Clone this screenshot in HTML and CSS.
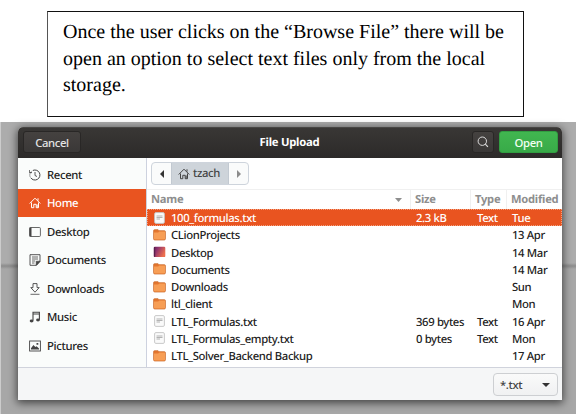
FILE: index.html
```html
<!DOCTYPE html>
<html lang="en">
<head>
<meta charset="utf-8">
<title>File Upload</title>
<link rel="stylesheet" href="styles.css">
</head>
<body>
<svg class="defs" width="0" height="0">
  <defs>
    <linearGradient id="desk" x1="0" y1="0" x2="1" y2="0.5"><stop offset="0" stop-color="#6f2457"/><stop offset=".3" stop-color="#8b3070"/><stop offset="1" stop-color="#ee6f4e"/></linearGradient>
    <symbol id="home" viewBox="0 0 12 12"><path d="M.7 6.5 6 1.2l5.3 5.3M2.5 5.5v5.2h2.3V7.3h2.4v3.4h2.3V5.5M9 1.3v2.4M8.2 7.5v3" fill="none" stroke="currentColor"/></symbol>
    <symbol id="folder" viewBox="0 0 13 12"><path d="M1.5.7h3.6l1 1h5.3q1 0 1 1v7.1q0 1.2-1.2 1.2H1.8Q.6 11 .6 9.800V1.700q0-1 .9-1z" fill="#e4762f" stroke="#c96829" stroke-width=".7"/><path d="M1 3.400h4.200l1-.9H12v7.200q0 .8-.8.8H1.800Q1 10.500 1 9.700z" fill="#f79e55"/></symbol>
    <symbol id="file" viewBox="0 0 12 12"><rect x="1.100" y=".6" width="9.800" height="10.800" rx="1.300" fill="#fafafa" stroke="#c3c3c3" stroke-width=".9"/><path d="M3 4h6M3 5.500h6M3 7h3.500" stroke="#aaa" stroke-width=".9"/></symbol>
    <symbol id="desktopfolder" viewBox="0 0 13 12"><rect x=".7" y=".7" width="11.600" height="10.400" rx="1.200" fill="url(#desk)"/><path d="M1.600 1v9.800" stroke="#57204b" stroke-width="1.200"/></symbol>
  </defs>
</svg>
<div class="note"><p>Once the user clicks on the “Browse File” there will be</p><p>open an option to select text files only from the local</p><p>storage.</p></div>
<main class="backdrop">
  <section class="dialog">
    <header class="titlebar">
      <button class="btn cancel">Cancel</button>
      <h1>File Upload</h1>
      <button class="btn search"><svg width="12" height="12" viewBox="0 0 12 12"><circle cx="5.300" cy="5.200" r="4.200" fill="none" stroke="#ddd"/><path d="m8.300 8.200 2.600 2.600" stroke="#ddd" stroke-width="1.200"/></svg></button>
      <button class="btn open">Open</button>
    </header>
    <div class="content">
      <nav class="places">
        <div class="place"><svg viewBox="0 0 12 12"><path d="M4 1.400A5 5 0 1 1 1.700 8.700" fill="none" stroke="currentColor"/><path d="M1 7.500A5 5 0 0 1 3.200 1.800" fill="none" stroke="currentColor" stroke-dasharray="1 1"/><path d="M6 3v3.500l2 1M.3 1v2.600H3" fill="none" stroke="currentColor" stroke-width=".9"/></svg><span>Recent</span></div>
        <div class="place active"><svg><use href="#home"/></svg><span>Home</span></div>
        <div class="place"><svg viewBox="0 0 12 12"><rect x=".6" y="1.500" width="10.800" height="9" rx="1" fill="none" stroke="currentColor" stroke-width=".8"/><path d="M1.500 1.500v9" stroke="currentColor" stroke-width="2"/></svg><span>Desktop</span></div>
        <div class="place"><svg viewBox="0 0 12 12"><path d="M1 .7h10v6.600L7.300 11.300H1zM11 7.300H7.300v4z" fill="none" stroke="currentColor" stroke-width=".9"/><path d="M7.400 7.400H11l-3.600 3.900z" fill="currentColor"/><path d="M3 3h6M3 5h6M3 7h3.200M3 9h2.500" stroke="currentColor" stroke-width=".8"/></svg><span>Documents</span></div>
        <div class="place"><svg viewBox="0 0 12 12"><path d="M4 .6h4v4h2.200L6 9.200 1.800 4.600H4z" fill="none" stroke="currentColor" stroke-width=".9"/><path d="M1.500 11.300h9" stroke="currentColor" stroke-width=".8"/></svg><span>Downloads</span></div>
        <div class="place"><svg viewBox="0 0 12 12"><path d="M4 9.600V1.200h6.400v7.600M4 3h6.400" fill="none" stroke="currentColor" stroke-width="1.100"/><ellipse cx="2.600" cy="10" rx="1.900" ry="1.400" fill="currentColor"/><ellipse cx="9" cy="9" rx="1.900" ry="1.400" fill="currentColor"/></svg><span>Music</span></div>
        <div class="place"><svg viewBox="0 0 12 12"><rect x=".6" y="1" width="10.800" height="10" fill="none" stroke="currentColor" stroke-width=".9"/><path d="M2 9.500V8.200L4.400 5l2 2 1.200-.8L10 8.400v1.100zM7.500 3h1.800v1.800H7.500z" fill="currentColor"/></svg><span>Pictures</span></div>
      </nav>
      <div class="browser">
        <div class="pathbar"><span class="step"><svg width="4" height="8"><path d="M4 0v8L0 4z" fill="#333"/></svg></span><span class="here"><svg width="12" height="12"><use href="#home"/></svg><span>tzach</span></span><span class="step"><svg width="4" height="8"><path d="M0 0v8l4-4z" fill="#8c8c8c"/></svg></span></div>
        <div class="row head"><span class="name">Name<svg width="7" height="4"><path d="M0 0h7L3.500 4z" fill="#8e8e8e"/></svg></span><span>Size</span><span>Type</span><span>Modified</span></div>
        <div class="files">
          <div class="row selected"><svg><use href="#file"/></svg><span>100_formulas.txt</span><span>2.3 kB</span><span>Text</span><span>Tue</span></div>
          <div class="row"><svg><use href="#folder"/></svg><span>CLionProjects</span><span></span><span></span><span>13 Apr</span></div>
          <div class="row"><svg><use href="#desktopfolder"/></svg><span>Desktop</span><span></span><span></span><span>14 Mar</span></div>
          <div class="row"><svg><use href="#folder"/></svg><span>Documents</span><span></span><span></span><span>14 Mar</span></div>
          <div class="row"><svg><use href="#folder"/></svg><span>Downloads</span><span></span><span></span><span>Sun</span></div>
          <div class="row"><svg><use href="#folder"/></svg><span>ltl_client</span><span></span><span></span><span>Mon</span></div>
          <div class="row"><svg><use href="#file"/></svg><span>LTL_Formulas.txt</span><span>369 bytes</span><span>Text</span><span>16 Apr</span></div>
          <div class="row"><svg><use href="#file"/></svg><span>LTL_Formulas_empty.txt</span><span>0 bytes</span><span>Text</span><span>Mon</span></div>
          <div class="row"><svg><use href="#folder"/></svg><span>LTL_Solver_Backend Backup</span><span></span><span></span><span>17 Apr</span></div>
          <div class="row"><svg><use href="#folder"/></svg></div>
        </div>
      </div>
    </div>
    <footer class="actions"><button class="filter"><span>*.txt</span><svg width="8" height="4"><path d="M0 0h8L4 4z" fill="#333"/></svg></button></footer>
  </section>
</main>
</body>
</html>
```

FILE: styles.css
```css
* { box-sizing: border-box; }
body { margin: 0; width: 576px; height: 414px; overflow: hidden; background: #fff; padding-top: 11px; font: 500 11.3px "Noto Sans", sans-serif; letter-spacing: -.36px; color: #222; text-rendering: geometricPrecision; }
.defs { position: absolute; }
svg { display: block; flex: none; }
button { font: inherit; letter-spacing: inherit; padding: 0; }
.note { width: 477px; height: 106px; margin-left: 47px; border: 1px solid #111; border-left-color: #555; padding: 7px 0 0 15px; font: 20px/26.7px "Liberation Serif", serif; letter-spacing: 0; color: #000; white-space: nowrap; }
.note p { margin: 0; }
.backdrop { height: 292px; margin-top: 5px; padding: 5px 14px 14px 17px; border-left: 1px solid #ccc; background: linear-gradient(#acacac 0 141px, #969696 143px, #8c8c8c 144px, #a7a7a7 147px); }
.dialog { height: 273px; width: 544px; background: #fff; border-radius: 5px 5px 0 0; box-shadow: 0 2px 9px 1px rgba(0,0,0,.6); overflow: hidden; }
.titlebar { height: 31px; display: grid; grid-template-columns: 58px 1fr 22px 59px; column-gap: 5px; align-items: start; padding: 3px 4px 0 5px; background: linear-gradient(#393735, #2c2a29); border-top: 1px solid #484644; }
.titlebar h1 { margin: 0 0 0 26px; text-align: center; color: #fff; font-size: 11.3px; line-height: 24px; font-weight: 700; letter-spacing: -.25px; }
.btn { height: 22px; border: 1px solid #292726; border-radius: 3px; background: linear-gradient(#454240, #3a3837); color: #e4e4e4; font-size: 11.3px; }
.search { display: flex; align-items: center; justify-content: center; }
.open { background: linear-gradient(#41b650, #38aa48); border-color: #319d41; color: #f2fff3; }
.content { height: 210px; display: flex; border-bottom: 1px solid #d0d3dc; }
.places { width: 129px; border-right: 1px solid #cdd2df; background: #fafcfb; padding-top: 2.5px; overflow: hidden; }
.place { height: 28.5px; display: flex; align-items: center; gap: 6px; padding-left: 11px; color: #444; letter-spacing: -.33px; }
.place span { color: #222; padding-top: 1px; }
.place svg { width: 12px; height: 12px; }
.place.active, .place.active span { color: #fff; }
.place.active { background: #e95420; border-bottom: 1px solid #fafcfb; }
.browser { flex: 1; overflow: hidden; background: #fff; }
.pathbar { width: 98px; height: 23px; margin: 4px 0 4px 4px; display: flex; border: 1px solid #ced4dc; border-radius: 4px; overflow: hidden; background: #fafbfb; color: #444; }
.step { width: 19px; display: flex; align-items: center; justify-content: center; }
.here { flex: 1; display: flex; align-items: center; gap: 3px; padding-left: 6px; background: #ced4da; border: solid #c2c9d1; border-width: 0 1px; }
.row { height: 17.25px; display: grid; grid-template-columns: 18px 245px 61px 35px 1fr; align-items: center; padding-left: 6px; white-space: nowrap; line-height: 17px; }
.files .row > span { line-height: 15px; padding-top: 2px; }
.row svg { width: 13px; height: 12px; }
.row.head { height: 20px; grid-template-columns: 259px 60px 36px 1fr; padding-left: 4px; border-top: 1px solid #f0f0f0; color: #8e8e8e; font-weight: 700; font-size: 11.2px; letter-spacing: -.25px; }
.head > span { height: 19px; line-height: 19px; padding-left: 4px; border-left: 1px solid #f0f0f0; }
.head .name { display: flex; align-items: center; justify-content: space-between; padding: 0 8px 0 0; border: 0; }
.head svg { width: 7px; height: 4px; }
.files { height: 159px; overflow: hidden; }
.row.selected { background: #e95420; color: #fff; outline: 1px dotted #f3a07f; outline-offset: -1px; }
.actions { height: 32px; display: flex; justify-content: flex-end; background: #f5f6f7; padding: 5px 4px 0 0; }
.filter { width: 65px; height: 23px; display: flex; align-items: center; justify-content: space-between; padding: 0 7px 0 6px; border: 1px solid #cdcfd2; border-radius: 4px; background: linear-gradient(#fafafa, #f0f1f2); color: #444; }
```
